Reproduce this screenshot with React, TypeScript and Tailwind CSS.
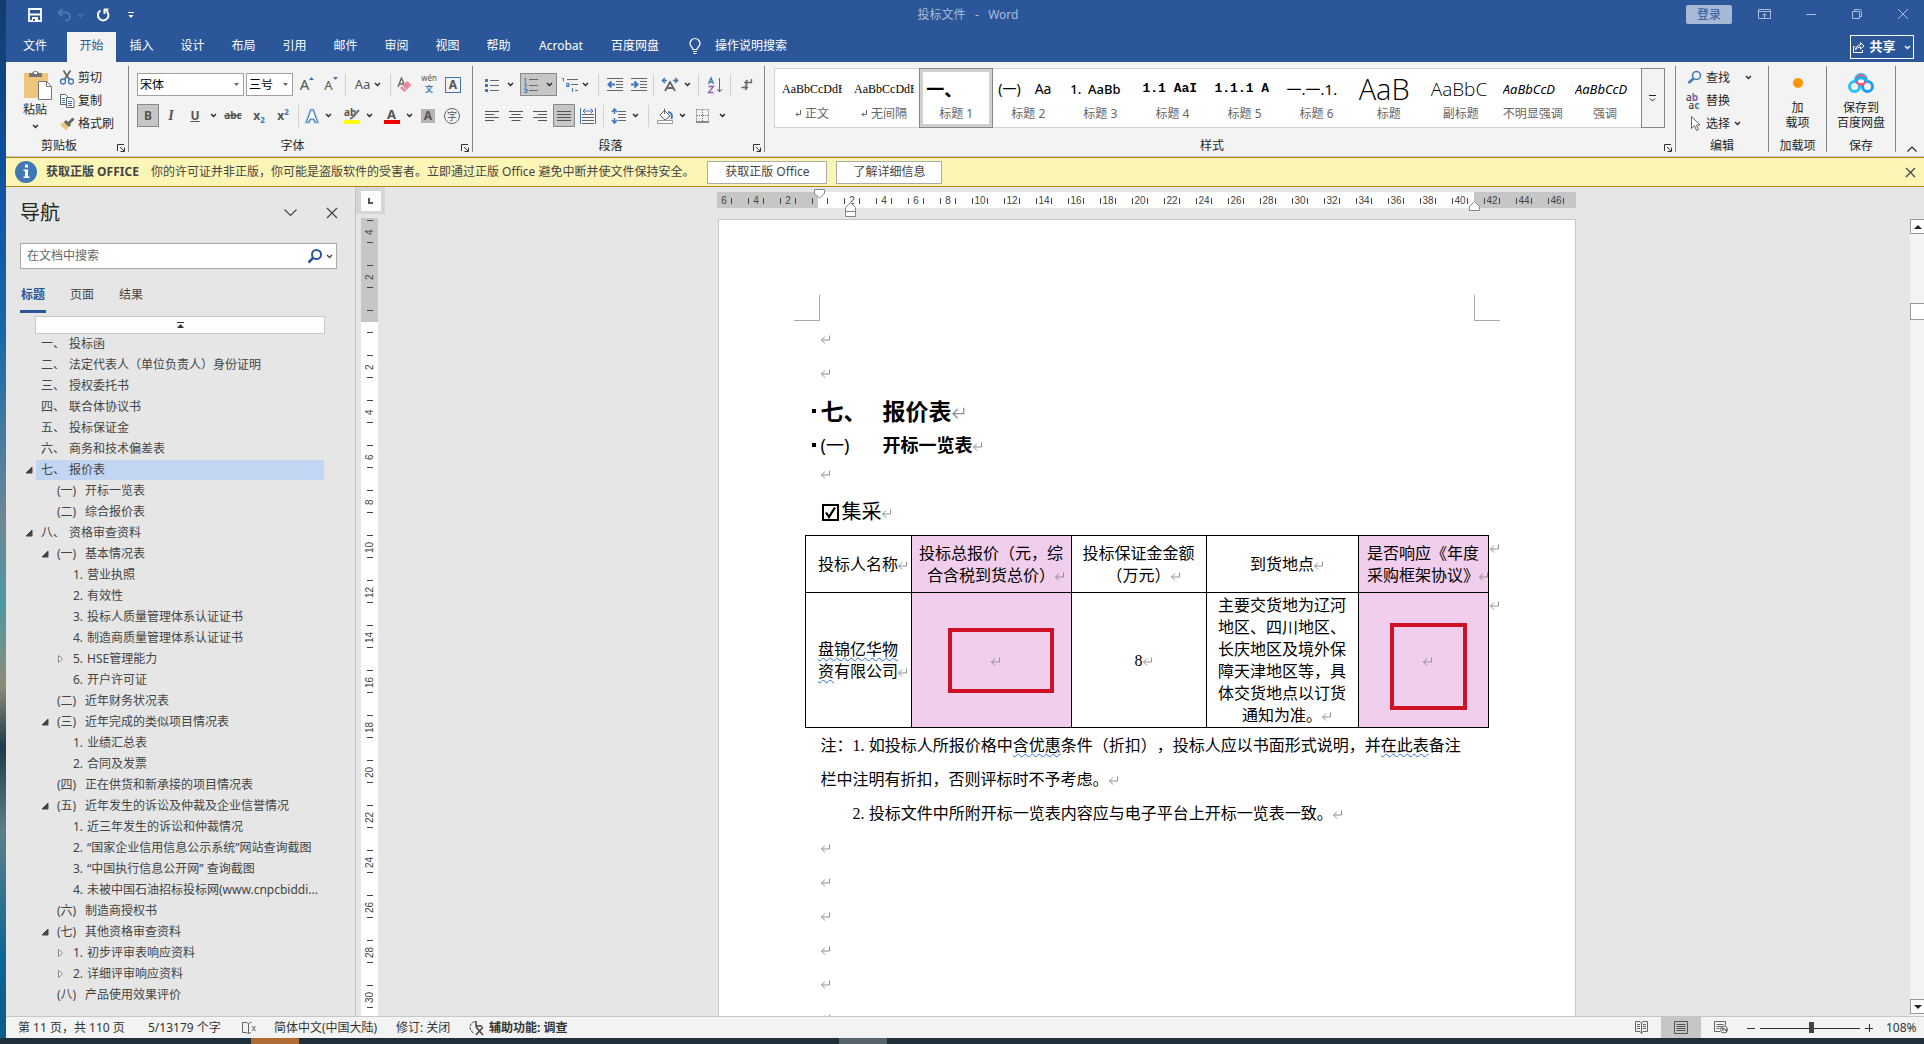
import type { ReactNode } from "react";

const navItems = [
  { level: 1, no: "一、", text: "投标函" },
  { level: 1, no: "二、", text: "法定代表人（单位负责人）身份证明" },
  { level: 1, no: "三、", text: "授权委托书" },
  { level: 1, no: "四、", text: "联合体协议书" },
  { level: 1, no: "五、", text: "投标保证金" },
  { level: 1, no: "六、", text: "商务和技术偏差表" },
  { level: 1, no: "七、", text: "报价表", state: "open", active: true },
  { level: 2, no: "(一)", text: "开标一览表" },
  { level: 2, no: "(二)", text: "综合报价表" },
  { level: 1, no: "八、", text: "资格审查资料", state: "open" },
  { level: 2, no: "(一)", text: "基本情况表", state: "open" },
  { level: 3, no: "1.", text: "营业执照" },
  { level: 3, no: "2.", text: "有效性" },
  { level: 3, no: "3.", text: "投标人质量管理体系认证证书" },
  { level: 3, no: "4.", text: "制造商质量管理体系认证证书" },
  { level: 3, no: "5.", text: "HSE管理能力", state: "closed" },
  { level: 3, no: "6.", text: "开户许可证" },
  { level: 2, no: "(二)", text: "近年财务状况表" },
  { level: 2, no: "(三)", text: "近年完成的类似项目情况表", state: "open" },
  { level: 3, no: "1.", text: "业绩汇总表" },
  { level: 3, no: "2.", text: "合同及发票" },
  { level: 2, no: "(四)", text: "正在供货和新承接的项目情况表" },
  { level: 2, no: "(五)", text: "近年发生的诉讼及仲裁及企业信誉情况", state: "open" },
  { level: 3, no: "1.", text: "近三年发生的诉讼和仲裁情况" },
  { level: 3, no: "2.", text: "“国家企业信用信息公示系统”网站查询截图" },
  { level: 3, no: "3.", text: "“中国执行信息公开网” 查询截图" },
  { level: 3, no: "4.", text: "未被中国石油招标投标网(www.cnpcbiddi..." },
  { level: 2, no: "(六)", text: "制造商授权书" },
  { level: 2, no: "(七)", text: "其他资格审查资料", state: "open" },
  { level: 3, no: "1.", text: "初步评审表响应资料", state: "closed" },
  { level: 3, no: "2.", text: "详细评审响应资料", state: "closed" },
  { level: 2, no: "(八)", text: "产品使用效果评价" },
];

const ribbonTabs = ["插入", "设计", "布局", "引用", "邮件", "审阅", "视图", "帮助"];

const styleItems = [
  { name: "正文", mark: true, sample: "AaBbCcDdE", look: "font-['Liberation_Serif'] text-[12px]" },
  { name: "无间隔", mark: true, sample: "AaBbCcDdE", look: "font-['Liberation_Serif'] text-[12px]" },
  { name: "标题 1", sample: "一、", look: "font-bold text-[18px]", selected: true },
  { name: "标题 2", sample: "(一)　Aa", look: "text-[14px]" },
  { name: "标题 3", sample: "1.  AaBb", look: "font-medium text-[13px]" },
  { name: "标题 4", sample: "1.1 AaI", look: "font-['Liberation_Mono'] font-bold text-[13px]" },
  { name: "标题 5", sample: "1.1.1 A", look: "font-['Liberation_Mono'] font-bold text-[13px]" },
  { name: "标题 6", sample: "一.一.1.", look: "text-[15px] text-[#1f4e69]" },
  { name: "标题", sample: "AaB", look: "font-['Open_Sans'] font-light text-[29px]" },
  { name: "副标题", sample: "AaBbC", look: "font-['Open_Sans'] font-light text-[19px] text-[#5a5a5a]" },
  { name: "不明显强调", sample: "AaBbCcD", look: "italic text-[13px] text-[#404040]" },
  { name: "强调", sample: "AaBbCcD", look: "italic text-[13px]" },
];

const rulerX = ["6", "4", "2", "", ...Array.from({ length: 23 }, (_, i) => String(i * 2 + 2))];
const rulerY = ["4", "2", "", ...Array.from({ length: 15 }, (_, i) => String(i * 2 + 2))];

const Svg = ({ w = 16, h = 16, className = "", children }: { w?: number; h?: number; className?: string; children: ReactNode }) => (
  <svg
    width={w}
    height={h}
    viewBox={`0 0 ${w} ${h}`}
    fill="none"
    stroke="currentColor"
    className={`shrink-0 overflow-visible ${className}`}
    aria-hidden="true"
  >
    {children}
  </svg>
);

const Chevron = ({ className = "" }: { className?: string }) => (
  <Svg w={7} h={5} className={className}>
    <path d="M1 1l2.5 2.5L6 1" strokeWidth="1.3" />
  </Svg>
);

const Sep = ({ className = "mx-0.5" }: { className?: string }) => (
  <span className={`h-[22px] w-px shrink-0 bg-[#d0d0d0] ${className}`} />
);

const Tool = ({ label, className = "w-6", children }: { label: string; className?: string; children: ReactNode }) => (
  <button aria-label={label} className={`flex h-[23px] shrink-0 items-center justify-center ${className}`}>
    {children}
  </button>
);

const Launcher = () => (
  <button aria-label="对话框启动器" className="absolute right-[3px] bottom-0 h-2">
    <Svg w={8} h={8} className="text-[#333]">
      <path d="M.5 7V.5H7M3 3l4 4M7.5 3.5v4h-4" />
    </Svg>
  </button>
);

const Group = ({ title, className = "", launcher, children }: { title: string; className?: string; launcher?: boolean; children: ReactNode }) => (
  <section className={`relative flex h-[86px] shrink-0 flex-col justify-between border-r border-[#858585] ${className}`}>
    {children}
    <div className={`h-[13px] text-center leading-[13px] ${launcher ? "pr-4" : ""}`}>{title}</div>
    {launcher && <Launcher />}
  </section>
);

// paragraph mark, takes no room in the line
const Mark = ({ big = false }: { big?: boolean }) => (
  <span className="inline-block w-0 whitespace-nowrap">
    <svg
      width={big ? 14 : 10}
      height={big ? 12 : 9}
      viewBox="0 0 10 9"
      fill="none"
      stroke="#909090"
      className="inline-block max-w-none overflow-visible"
      aria-hidden="true"
    >
      <path d="M8.500 .5v4.500H.5M4 1.500L.5 5 4 8.500" />
    </svg>
  </span>
);

const Num = ({ children }: { children: ReactNode }) => (
  <span className="inline-block min-w-2 font-['Liberation_Serif',serif]">{children}</span>
);

const Wavy = ({ children }: { children: ReactNode }) => (
  <span className="underline decoration-[#2f6fe0] decoration-wavy decoration-1 underline-offset-2">{children}</span>
);

const TitleBar = () => (
  <header className="flex h-8 items-start text-[#a9bddb]">
    <div className="flex h-[30px] flex-1 items-center pl-[22px] text-white">
      <button aria-label="保存">
        <Svg w={14} h={14}>
          <path d="M1 1h12v12H1z" strokeWidth="1.8" />
          <path d="M1 6.500h12" strokeWidth="2" />
          <path d="M4 9h6v4H4z" fill="white" stroke="none" />
          <path d="M5 11h2v2H5z" fill="#2b579a" stroke="none" />
        </Svg>
      </button>
      <button aria-label="撤消" className="ml-[15px] flex items-center gap-1.5 text-[#4a78ba]">
        <Svg w={14} h={14}>
          <path d="M5.500 1L1.500 4.500l4 3.500M2 4.500h7a4 4 0 0 1 0 8H8" strokeWidth="2" />
        </Svg>
        <Chevron />
      </button>
      <button aria-label="重复" className="ml-3">
        <Svg w={14} h={14}>
          <path d="M4.500 2.500A5.300 5.300 0 1 0 10 2.600" strokeWidth="2" />
          <path d="M8 1.500h4.500M8.500 1v5" strokeWidth="2" />
        </Svg>
      </button>
      <button aria-label="自定义快速访问工具栏" className="ml-[18px]">
        <Svg w={6} h={7}>
          <path d="M0 .5h6" />
          <path d="M.5 3h5L3 6z" fill="white" stroke="none" />
        </Svg>
      </button>
    </div>
    <h1 className="h-[30px] text-[12px] leading-[30px] whitespace-pre">投标文件   -   Word</h1>
    <div className="flex h-[27px] flex-1 items-center justify-end pr-4">
      <button className="mt-0.5 h-[19px] w-[46px] rounded-xs bg-[#a6b9d6] text-[12px] leading-[19px] text-[#2b579a]">登录</button>
      <button aria-label="功能区显示选项" className="ml-[26px]">
        <Svg w={13} h={10}>
          <path d="M.5.5h12v9H.5zM.5 2.500h12M6.500 9V4.500M4.500 6.500l2-2 2 2" />
        </Svg>
      </button>
      <button aria-label="最小化" className="ml-[35px]">
        <Svg w={10} h={10}>
          <path d="M0 5.500h10" />
        </Svg>
      </button>
      <button aria-label="还原" className="ml-9">
        <Svg w={10} h={10}>
          <path d="M.5 2.500h7v7h-7zM2.500 2V.5h5a2 2 0 0 1 2 2v5H8" />
        </Svg>
      </button>
      <button aria-label="关闭" className="ml-9">
        <Svg w={10} h={10}>
          <path d="M0 0l10 10M10 0L0 10" />
        </Svg>
      </button>
    </div>
  </header>
);

const Tabs = () => (
  <nav className="flex h-[30px] items-stretch text-[12px] text-white">
    <button className="mr-[3px] w-[58px] pb-0.5">文件</button>
    <button className="w-[49px] bg-[#f3f3f3] pb-0.5 text-[#2b579a]">开始</button>
    {ribbonTabs.map((tab) => (
      <button key={tab} className="w-[51px] pb-0.5">
        {tab}
      </button>
    ))}
    <button className="w-[74px] pb-0.5">Acrobat</button>
    <button className="w-[74px] pb-0.5">百度网盘</button>
    <button className="ml-[17px] flex items-center gap-[14px] pb-0.5">
      <Svg w={12} h={16}>
        <path d="M4 11.500c0-2-3-3-3-6a5 5 0 0 1 10 0c0 3-3 4-3 6zM4 13.500h4M4.500 15.500h3" strokeWidth="1.200" />
      </Svg>
      操作说明搜索
    </button>
    <button className="mt-[3px] mr-2.5 ml-auto flex h-6 w-16 items-center justify-center gap-1 border border-white text-[13px] font-bold">
      <Svg w={12} h={12}>
        <path d="M2 5.500H.5v6h9V9M2.500 9c0-3 2-5 5-5V1.500L11 5 7.500 8V6c-2 0-4 1-5 3z" />
      </Svg>
      共享
      <Chevron className="ml-1" />
    </button>
  </nav>
);

const Lines = ({ d }: { d: string }) => (
  <Svg w={14} h={12} className="text-[#555]">
    <path d={d} />
  </Svg>
);

const ClipboardGroup = () => (
  <Group title="剪贴板" className="w-[123px]" launcher>
    <div className="flex pl-[13px]">
      <button className="flex w-8 flex-col items-center pt-1">
        <Svg w={28} h={30} className="ml-1">
          <path d="M1 3h24v25H1z" fill="#eec57a" stroke="none" />
          <path d="M6 3h3a4 4 0 0 1 7 0h3v4H6z" fill="#777" stroke="none" />
          <path d="M11 2h3v2h-3z" fill="#f3f3f3" stroke="none" />
          <path d="M15.500 11.500h8l5 5v13h-13z" fill="white" stroke="#777" />
          <path d="M23.500 11.500v5h5" stroke="#777" />
        </Svg>
        <span className="leading-5">粘贴</span>
        <Chevron className="mt-1" />
      </button>
      <div className="flex flex-col pl-[9px]">
        <button className="flex h-[23px] items-center gap-1">
          <Svg w={14} h={15}>
            <path d="M3.500.5l6 9M10.500.5l-6 9" stroke="#666" strokeWidth="1.800" />
            <circle cx="3" cy="11.500" r="2.500" stroke="#3f78b5" strokeWidth="1.300" />
            <circle cx="11" cy="11.500" r="2.500" stroke="#3f78b5" strokeWidth="1.300" />
          </Svg>
          剪切
        </button>
        <button className="flex h-[23px] items-center gap-1">
          <Svg w={14} h={14} className="text-[#666]">
            <path d="M.5.500h5l2 2v8h-7z" fill="white" />
            <path d="M6.500 3.500h5l2.500 2.500v7.500H6.500z" fill="white" />
            <path d="M2 4.500h3M2 6.500h3M2 8.500h3M8 7.500h4M8 9.500h4M8 11.500h4" stroke="#3f78b5" />
          </Svg>
          复制
        </button>
        <button className="flex h-[23px] items-center gap-1">
          <Svg w={14} h={14}>
            <path d="M0 7l5-2 4 4-3 5z" fill="#eec57a" stroke="none" />
            <path d="M5 4l5 5M9 6l4.500-4.500" stroke="#666" strokeWidth="3" />
          </Svg>
          格式刷
        </button>
      </div>
    </div>
  </Group>
);

const FontGroup = () => (
  <Group title="字体" className="w-[344px]" launcher>
    <div className="flex flex-col gap-2 pt-[7px] pl-2 text-[#555]">
      <div className="flex items-center">
        <select aria-label="字体" className="h-[23px] w-[107px] appearance-none border border-[#a0a0a0] bg-white px-0.5 text-[12px] leading-none text-black">
          <option>宋体</option>
        </select>
        <Svg w={5} h={3} className="-ml-2.5 mr-[5px]">
          <path d="M0 0h5L2.500 3z" fill="#666" stroke="none" />
        </Svg>
        <select aria-label="字号" className="ml-0.5 h-[23px] w-[47px] appearance-none border border-[#a0a0a0] bg-white px-0.5 text-[12px] leading-none text-black">
          <option>三号</option>
        </select>
        <Svg w={5} h={3} className="-ml-2.5 mr-[5px]">
          <path d="M0 0h5L2.500 3z" fill="#666" stroke="none" />
        </Svg>
        <Tool label="增大字号" className="ml-0.5 w-6">
          <span className="text-[15px]">A</span>
          <Svg w={5} h={3} className="mb-3">
            <path d="M0 3h5L2.500 0z" fill="#3f78b5" stroke="none" />
          </Svg>
        </Tool>
        <Tool label="减小字号">
          <span className="pt-0.5 text-[13px]">A</span>
          <Svg w={5} h={3} className="mb-3">
            <path d="M0 0h5L2.500 3z" fill="#3f78b5" stroke="none" />
          </Svg>
        </Tool>
        <Sep />
        <Tool label="更改大小写" className="w-10 gap-1 text-[13px]">
          Aa <Chevron className="text-[#222]" />
        </Tool>
        <Sep />
        <Tool label="清除所有格式">
          <Svg w={16} h={16}>
            <path d="M1 10L4.500 1 7 7M2.500 7h4" stroke="#666" strokeWidth="1.400" />
            <path d="M3 11l7-7 4.500 4-7 7z" fill="#e8879b" stroke="none" />
            <path d="M5 9l4.500 4" stroke="#f3f3f3" />
          </Svg>
        </Tool>
        <Tool label="拼音指南" className="w-6 flex-col">
          <span className="h-2 text-[8px] leading-[8px]">wén</span>
          <span className="mt-px text-[8px] leading-[12px] font-bold text-[#3f78b5]">文</span>
        </Tool>
        <Tool label="字符边框">
          <span className="h-4 w-4 border border-[#3f78b5] text-[12px] leading-[14px] font-bold">A</span>
        </Tool>
      </div>
      <div className="flex items-center">
        <Tool label="加粗" className="w-[22px] border border-[#8a8a8a] bg-[#c6c6c6] text-[12px] font-bold">B</Tool>
        <Tool label="倾斜" className="w-6 font-['Liberation_Serif'] text-[14px] font-bold italic">I</Tool>
        <Tool label="下划线" className="w-6 text-[12px] font-bold underline">U</Tool>
        <Tool label="下划线样式" className="w-3 text-[#222]"><Chevron /></Tool>
        <Tool label="删除线" className="mr-px ml-px w-[26px] text-[10px] font-bold line-through">abc</Tool>
        <Tool label="下标" className="w-6 text-[12px] font-bold">
          x<span className="pt-2 text-[8px] leading-none text-[#3f78b5]">2</span>
        </Tool>
        <Tool label="上标" className="w-6 text-[12px] font-bold">
          x<span className="pb-2 text-[8px] leading-none text-[#3f78b5]">2</span>
        </Tool>
        <Sep className="mx-[3px]" />
        <Tool label="文本效果和版式" className="mr-1 w-8 gap-1.5">
          <Svg w={14} h={14}>
            <path d="M1.500 13L6 1h2l4.500 12h-2.500L9 10H5l-1 3z" stroke="#a9c8ea" strokeWidth="3" />
            <path d="M1.500 13L6 1h2l4.500 12h-2.500L9 10H5l-1 3z" stroke="#3f78b5" fill="white" />
          </Svg>
          <Chevron className="text-[#222]" />
        </Tool>
        <Tool label="文本突出显示颜色" className="w-10 gap-1.5">
          <Svg w={16} h={16}>
            <text x="0" y="8" fontSize="10" fontWeight="bold" fill="#555" stroke="none">ab</text>
            <path d="M15 2L9 9l-3 2" stroke="#777" strokeWidth="2" />
            <path d="M0 12h16v4H0z" fill="#ff0" stroke="none" />
          </Svg>
          <Chevron className="text-[#222]" />
        </Tool>
        <Tool label="字体颜色" className="w-10 gap-1.5">
          <span className="h-4 w-4 border-b-4 border-[#f00000] text-center text-[13px] leading-3 font-bold">A</span>
          <Chevron className="text-[#222]" />
        </Tool>
        <Tool label="字符底纹" className="-ml-0.5 w-6">
          <span className="h-3.5 w-3.5 bg-[#b5b5b5] text-[12px] leading-[14px] font-bold">A</span>
        </Tool>
        <Tool label="带圈字符">
          <span className="h-4 w-4 rounded-full border border-[#666] text-[10px] leading-[14px]">字</span>
        </Tool>
      </div>
    </div>
  </Group>
);

const ParagraphGroup = () => (
  <Group title="段落" className="w-[292px]" launcher>
    <div className="flex flex-col gap-2 pt-[7px] text-[#666]">
      <div className="flex items-center pl-[7px]">
        <Tool label="项目符号" className="w-[38px] gap-2">
          <Svg w={14} h={14}>
            <path d="M5 2.500h9M5 7.500h9M5 12.500h9" />
            <path d="M0 1h3v3H0zM0 6h3v3H0zM0 11h3v3H0z" fill="#3f78b5" stroke="none" />
          </Svg>
          <Chevron className="text-[#222]" />
        </Tool>
        <Tool label="编号" className="ml-0.5 w-[37px] gap-2 border border-[#8a8a8a] bg-[#c6c6c6]">
          <Svg w={14} h={16}>
            <path d="M5 2.500h9M5 8.500h9M5 13.500h9" />
            <path d="M0 1.500h1.500v4M0 7h2.500L1 10h2M0 12h3v3.500H0M1 13.500h2" stroke="#3f78b5" />
          </Svg>
          <Chevron className="text-[#222]" />
        </Tool>
        <Tool label="多级列表" className="w-[37px] gap-1">
          <Svg w={16} h={16}>
            <path d="M5 2.500h11M9 7.500h7M13 13.500h3" />
            <path d="M0 1.500h1.500v3M4 6.500h3v3H4.500v-1.500H7M10.500 11v4" stroke="#3f78b5" />
          </Svg>
          <Chevron className="text-[#222]" />
        </Tool>
        <Sep className="mr-1 ml-1" />
        <Tool label="减少缩进量" className="w-[23px]">
          <Svg w={16} h={13}>
            <path d="M0 .5h16M9 3.500h7M9 6.500h7M9 9.500h7M0 12.500h16" />
            <path d="M8 6.500H2M4.500 3.500l-3 3 3 3" stroke="#3f78b5" strokeWidth="2" />
          </Svg>
        </Tool>
        <Tool label="增加缩进量" className="w-[25px]">
          <Svg w={16} h={13}>
            <path d="M0 .5h16M9 3.500h7M9 6.500h7M9 9.500h7M0 12.500h16" />
            <path d="M0 6.500h6M3.500 3.500l3 3-3 3" stroke="#3f78b5" strokeWidth="2" />
          </Svg>
        </Tool>
        <Sep className="mr-1 ml-0.5" />
        <Tool label="中文版式" className="w-9 gap-1.5">
          <Svg w={16} h={13}>
            <path d="M3 13l5-9 5 9M5 10h6" strokeWidth="1.800" />
            <path d="M5 2.500H0M3 0L.5 2.500 3 5M11 2.500h5M13 0l2.500 2.500L13 5" stroke="#3f78b5" strokeWidth="1.500" />
          </Svg>
          <Chevron className="text-[#222]" />
        </Tool>
        <Sep className="mx-1" />
        <Tool label="排序" className="w-[23px]">
          <Svg w={14} h={16}>
            <path d="M.5 7L3 1l2.500 6M1.500 5h3" stroke="#3f78b5" strokeWidth="1.300" />
            <path d="M.5 9.500h5l-5 6h5" stroke="#8c5fb0" strokeWidth="1.300" />
            <path d="M11.500 1v14M9 12l2.500 3 2.500-3" />
          </Svg>
        </Tool>
        <Sep className="mr-1 ml-1" />
        <Tool label="显示/隐藏编辑标记" className="w-6">
          <Svg w={12} h={14}>
            <path d="M10.500 1v3.500H4M6.500 2L4 4.500 6.500 7M.5 9.500h6M4 7l2.500 2.500L4 12" strokeWidth="1.300" />
          </Svg>
        </Tool>
      </div>
      <div className="flex items-center pl-[7px]">
        <Tool label="左对齐"><Lines d="M0 1.500h14M0 4.500h9M0 7.500h14M0 10.500h9" /></Tool>
        <Tool label="居中"><Lines d="M0 1.500h14M2.500 4.500h9M0 7.500h14M2.500 10.500h9" /></Tool>
        <Tool label="右对齐"><Lines d="M0 1.500h14M5 4.500h9M0 7.500h14M5 10.500h9" /></Tool>
        <Tool label="两端对齐" className="ml-px w-[22px] border border-[#8a8a8a] bg-[#c6c6c6]">
          <Lines d="M0 1.500h14M0 4.500h14M0 7.500h14M0 10.500h14" />
        </Tool>
        <Tool label="分散对齐" className="w-[26px]">
          <Svg w={16} h={16}>
            <path d="M2 6.500h12M2 9.500h12M2 12.500h12M2 15.500h12" />
            <path d="M.5 0v16M15.500 0v16M3 3h10M5.500.5L3 3l2.500 2.500M10.500.5L13 3l-2.500 2.500" stroke="#3f78b5" />
          </Svg>
        </Tool>
        <Sep />
        <Tool label="行和段落间距" className="w-[38px] gap-1.5">
          <Svg w={14} h={16}>
            <path d="M6 3.500h8M6 6.500h8M6 9.500h8M6 12.500h8" />
            <path d="M2.500 1v5M0 4l2.500-3L5 4M2.500 15v-5M0 12l2.500 3L5 12" stroke="#3f78b5" strokeWidth="1.500" />
          </Svg>
          <Chevron className="text-[#222]" />
        </Tool>
        <Sep className="mx-1" />
        <Tool label="底纹" className="w-9 gap-1.5">
          <Svg w={16} h={16}>
            <path d="M7.500 2.500L13 8l-5 4-5-5zM7.500 6V.5" fill="white" />
            <path d="M11 4c3 0 5 3 3.500 7" stroke="#3f78b5" strokeWidth="2" />
            <path d="M.5 12.500h15v3H.5z" fill="white" stroke="#999" />
          </Svg>
          <Chevron className="text-[#222]" />
        </Tool>
        <Tool label="边框" className="ml-[3px] w-[38px] gap-2.5">
          <Svg w={13} h={14}>
            <path d="M.5.5h12v12M.5.5v12M6.500 1v11M1 6.500h11" strokeDasharray="1 1" />
            <path d="M0 13h13" strokeWidth="1.500" />
          </Svg>
          <Chevron className="text-[#222]" />
        </Tool>
      </div>
    </div>
  </Group>
);

const StylesGroup = () => (
  <Group title="样式" className="flex-1" launcher>
    <div className="mt-0.5 mr-2.5 ml-[9px] flex h-[60px] border border-[#d0d0d0] bg-white pl-px">
      {styleItems.map((item) => (
        <button
          key={item.name}
          className={`flex min-w-0 flex-1 flex-col items-center ${item.selected ? "border-3 border-[#d0d0d0] outline outline-[#858585]" : "p-[3px]"}`}
        >
          <span className={`h-[34px] w-[60px] overflow-hidden text-left leading-[34px] whitespace-pre text-black ${item.look}`}>
            {item.sample}
          </span>
          <span className="flex items-center gap-1 text-[12px] leading-[15px] whitespace-nowrap text-[#666]">
            {item.mark && (
              <Svg w={6} h={7}>
                <path d="M5.500 0v4.500H1M3 2.500l-2 2 2 2" />
              </Svg>
            )}
            {item.name}
          </span>
        </button>
      ))}
      <button aria-label="其他样式" className="-my-px -mr-px flex w-6 shrink-0 items-center justify-center border border-[#858585] bg-[#f3f3f3]">
        <Svg w={7} h={7} className="text-[#222]">
          <path d="M0 .5h7M1 3.500L3.500 6 6 3.500" />
        </Svg>
      </button>
    </div>
  </Group>
);

const Ribbon = () => (
  <div className="flex h-[95px] border-b border-[#c8c6c4] bg-[#f3f3f3] pt-1 text-[12px] text-[#262626]">
    <ClipboardGroup />
    <FontGroup />
    <ParagraphGroup />
    <StylesGroup />
    <Group title="编辑" className="w-[93px]">
      <div className="flex flex-col pl-3">
        <button className="flex h-[23px] items-center">
          <Svg w={14} h={13} className="text-[#3f78b5]">
            <circle cx="8.500" cy="4.500" r="4" strokeWidth="1.500" />
            <path d="M5.500 7.500L.5 12" strokeWidth="2.500" />
          </Svg>
          <span className="ml-1">查找</span>
          <Chevron className="ml-[15px]" />
        </button>
        <button className="flex h-[23px] items-center">
          <span className="-ml-1 w-4 text-[10px] leading-[8px]">
            <span>a<b className="text-[#8c5fb0]">b</b></span>
            <span className="block pl-1">a<b className="text-[#3f78b5]">c</b></span>
          </span>
          <span className="ml-1.5">替换</span>
        </button>
        <button className="flex h-[23px] items-center">
          <Svg w={14} h={15} className="text-[#666]">
            <path d="M3.500.5v12l3-3 2 5 2-1-2-4.500h3.500z" fill="white" />
          </Svg>
          <span className="ml-1">选择</span>
          <Chevron className="ml-1" />
        </button>
      </div>
    </Group>
    <Group title="加载项" className="w-[58px]">
      <button className="flex flex-col items-center pt-3">
        <span className="h-2.5 w-2.5 rounded-full bg-[#ff9500]" />
        <span className="mt-3 leading-[15px]">加<br />载项</span>
      </button>
    </Group>
    <Group title="保存" className="w-[69px]">
      <button className="flex flex-col items-center pt-[7px]">
        <Svg w={26} h={20}>
          <circle cx="6.500" cy="13.500" r="5" stroke="#25c3f5" strokeWidth="3" />
          <circle cx="19.500" cy="13.500" r="5" stroke="#1b9df5" strokeWidth="3" />
          <path d="M7.500 9V7a5.500 5.500 0 0 1 11 0v2" stroke="#25c3f5" strokeWidth="3" />
          <circle cx="13" cy="7" r="4.500" fill="white" stroke="#f5517a" strokeWidth="2.500" />
          <path d="M8 8a5.500 5.500 0 0 1 10 0" stroke="#1bb0f5" strokeWidth="3" />
        </Svg>
        <span className="mt-[7px] leading-[15px]">保存到<br />百度网盘</span>
      </button>
    </Group>
    <button aria-label="折叠功能区" className="ml-1 flex w-6 items-end justify-center pb-1">
      <Svg w={10} h={6}>
        <path d="M.5 5.500L5 1l4.500 4.500" strokeWidth="1.200" />
      </Svg>
    </button>
  </div>
);

const MessageBar = () => (
  <div className="flex h-[30px] items-center border-y border-[#b08800] bg-[#fcf6b6] pr-[9px] pl-[9px] text-[12px] text-[#444]">
    <Svg w={22} h={22}>
      <circle cx="11" cy="11" r="11" fill="#3f78b5" stroke="none" />
      <path d="M10 3.500h3v3h-3zM8.500 8.500H13v7h1.500V17h-6v-1.500H10V10H8.500z" fill="white" stroke="none" />
    </Svg>
    <strong className="ml-[9px]">获取正版 OFFICE</strong>
    <span className="ml-3">你的许可证并非正版，你可能是盗版软件的受害者。立即通过正版 Office 避免中断并使文件保持安全。</span>
    <button className="ml-[13px] h-[23px] w-[120px] border border-[#ababab] bg-white">获取正版 Office</button>
    <button className="ml-[9px] h-[23px] w-[106px] border border-[#ababab] bg-white">了解详细信息</button>
    <button aria-label="关闭消息" className="ml-auto">
      <Svg w={9} h={9}>
        <path d="M0 0l9 9M9 0L0 9" strokeWidth="1.300" />
      </Svg>
    </button>
  </div>
);

const NavPane = () => (
  <aside className="flex w-[350px] shrink-0 flex-col border-r border-[#c0c0c0] text-[12px] text-[#444]">
    <div className="flex items-center pt-3 pr-[18px] pl-[14px]">
      <h2 className="flex-1 text-[20px] leading-7 text-[#262626]">导航</h2>
      <button aria-label="任务窗格选项" className="mr-[30px]">
        <Svg w={13} h={8}>
          <path d="M.5.5l6 6 6-6" strokeWidth="1.200" />
        </Svg>
      </button>
      <button aria-label="关闭窗格">
        <Svg w={10} h={10}>
          <path d="M0 0l10 10M10 0L0 10" strokeWidth="1.200" />
        </Svg>
      </button>
    </div>
    <div className="mt-4 ml-[14px] flex h-[26px] w-[317px] items-center border border-[#ababab] bg-white pr-[3px]">
      <input aria-label="在文档中搜索" placeholder="在文档中搜索" className="h-full flex-1 px-1.5 pb-0.5 outline-none placeholder:text-[#666]" />
      <Svg w={14} h={14} className="text-[#2b579a]">
        <circle cx="8.500" cy="5.500" r="4.500" strokeWidth="2" />
        <path d="M5 9l-4.500 4.500" strokeWidth="2.500" />
      </Svg>
      <Chevron className="ml-1" />
    </div>
    <div className="mt-[17px] ml-[14px] flex gap-[23px]">
      <button className="h-[27px] w-[26px] border-b-3 border-[#2b579a] pb-2 font-bold text-[#2b579a]">标题</button>
      <button className="h-[27px] w-[26px] pb-[11px]">页面</button>
      <button className="h-[27px] w-[26px] pb-[11px]">结果</button>
    </div>
    <button aria-label="跳转到开头" className="mt-[3px] ml-[29px] flex h-[18px] w-[290px] shrink-0 items-center justify-center border border-[#c6c6c6] bg-[#fdfdfd]">
      <Svg w={7} h={6} className="text-[#333]">
        <path d="M0 .5h7" />
        <path d="M0 6h7L3.500 2z" fill="#333" stroke="none" />
      </Svg>
    </button>
    <ul className="-mt-px [text-spacing-trim:space-all]">
      {navItems.map((item, i) => (
        <li
          key={i}
          className={`flex h-[21px] items-center ${item.level === 1 ? "pl-4" : item.level === 2 ? "pl-8" : "pl-12"}`}
        >
          <span className="mr-px flex w-[13px] shrink-0 justify-center">
            {item.state === "open" && (
              <Svg w={6} h={6} className="text-[#444]">
                <path d="M6 0v6H0z" fill="#444" />
              </Svg>
            )}
            {item.state === "closed" && (
              <Svg w={5} h={8} className="text-[#888]">
                <path d="M.5.5v7l4-3.500z" fill="white" />
              </Svg>
            )}
          </span>
          <a href="#" className={`flex h-5 items-center pl-[5px] leading-5 whitespace-nowrap ${item.active ? "w-[288px] bg-[#c2d5f2]" : ""}`}>
            <span className={item.level === 3 ? "min-w-[14px]" : "w-7"}>{item.no}</span>
            {item.text}
          </a>
        </li>
      ))}
    </ul>
  </aside>
);

const VerticalRuler = () => (
  <div className="flex w-[29px] shrink-0 flex-col overflow-hidden">
    <div className="flex h-[27px] w-[29px] shrink-0 items-center justify-center bg-[#d6d6d6]">
      <div className="flex h-5 w-5 items-center justify-center bg-[#fdfdfd]">
        <Svg w={5} h={6} className="text-[#555]">
          <path d="M1 0v5h4" strokeWidth="2" />
        </Svg>
      </div>
    </div>
    <div className="mt-1 ml-[5px] w-[17px] flex-1 overflow-hidden bg-[linear-gradient(#c6c6c6_104px,white_104px)]">
      <div className="-mt-[9px] font-['Liberation_Sans'] text-[10px] text-[#444]">
        {rulerY.map((n, i) => (
          <div key={i} className="flex h-[45px] flex-col items-center justify-between py-[11px]">
            <span className="h-px w-1.5 shrink-0 bg-[#444]" />
            <span className="flex h-3 rotate-180 items-center justify-center leading-none [writing-mode:vertical-rl]">{n}</span>
            <span className="h-px w-1.5 shrink-0 bg-[#444]" />
          </div>
        ))}
      </div>
    </div>
  </div>
);

const HorizontalRuler = () => (
  <div className="relative mt-[5px] w-[859px]">
    <div className="h-4 overflow-hidden bg-[linear-gradient(90deg,#c6c6c6_101px,white_101px,white_757px,#c6c6c6_757px)]">
      <div className="-ml-[9px] flex font-['Liberation_Sans'] text-[10px] leading-[17px] text-[#444]">
        {rulerX.map((n, i) => (
          <div key={i} className="flex w-8 shrink-0 items-center justify-between px-2">
            <span className="h-1.5 w-px bg-[#444]" />
            <span>{n}</span>
            <span className="h-1.5 w-px bg-[#444]" />
          </div>
        ))}
      </div>
    </div>
    <Svg w={11} h={10} className="absolute -top-[3px] left-[97px] text-[#888]">
      <path d="M.5.5h10v4L5.500 9 .5 4.500z" fill="white" />
    </Svg>
    <Svg w={11} h={15} className="absolute top-2.5 left-32 text-[#888]">
      <path d="M5.500.5l5 5v9H.5v-9zM.5 9.500h10" fill="white" />
    </Svg>
    <Svg w={11} h={10} className="absolute top-[9px] left-[752px] text-[#888]">
      <path d="M5.500.5l5 5v4H.5v-4z" fill="white" />
    </Svg>
  </div>
);

const PriceTable = () => (
  <table className="-ml-4 table-fixed border-collapse text-center text-[16px] leading-[22px] text-black">
    <colgroup>
      <col className="w-[106px]" />
      <col className="w-[160px]" />
      <col className="w-[135px]" />
      <col className="w-[152px]" />
      <col className="w-[130px]" />
    </colgroup>
    <thead>
      <tr className="h-[57px] [&>th]:border [&>th]:border-black [&>th]:font-normal">
        <th>投标人名称<Mark /></th>
        <th className="bg-[#f1ceec]">投标总报价（元，综<br />合含税到货总价）<Mark /></th>
        <th>投标保证金金额<br />（万元）<Mark /></th>
        <th>到货地点<Mark /></th>
        <th className="relative bg-[#f1ceec]">
          是否响应《年度<br />采购框架协议》<Mark />
          <span className="absolute top-0 left-full ml-0.5"><Mark /></span>
        </th>
      </tr>
    </thead>
    <tbody>
      <tr className="h-[135px] [&>td]:border [&>td]:border-black">
        <td><Wavy>盘锦亿华物</Wavy><br /><Wavy>资</Wavy>有限公司<Mark /></td>
        <td className="relative bg-[#f1ceec]">
          <Mark />
          <span className="absolute top-[35px] left-9 h-[65px] w-[106px] border-4 border-[#cf1126]" />
        </td>
        <td><Num>8</Num><Mark /></td>
        <td>
          主要交货地为辽河<br />地区、四川地区、<br />长庆地区及境外保<br />障天津地区等，具<br />体交货地点以订货<br />通知为准。<Mark />
        </td>
        <td className="relative bg-[#f1ceec]">
          <Mark />
          <span className="absolute top-[30px] left-[31px] h-[87px] w-[77px] border-4 border-[#cf1126]" />
          <span className="absolute top-0 left-full ml-0.5"><Mark /></span>
        </td>
      </tr>
    </tbody>
  </table>
);

const Page = () => (
  <article className="mt-[11px] w-[858px] flex-1 overflow-hidden border border-b-0 border-[#c6c6c6] bg-white whitespace-nowrap text-black [text-spacing-trim:space-all]">
    <div className="flex justify-between px-[75px] pt-[75px]">
      <span className="h-[26px] w-[26px] border-r border-b border-[#aaa]" />
      <span className="h-[26px] w-[26px] border-b border-l border-[#aaa]" />
    </div>
    <div className="pl-[102px] text-[16px]">
      <p className="h-[34px] leading-[34px]"><Mark /></p>
      <p className="h-[34px] leading-[34px]"><Mark /></p>
      <h2 className="-ml-[9px] flex h-11 items-center text-[23px] font-bold">
        <span className="mr-[5px] h-1 w-1 bg-black" />
        <span className="w-[62px]">七、</span>
        <span>报价表<Mark big /></span>
      </h2>
      <h3 className="-ml-[9px] flex h-6 items-center text-[18px] font-bold">
        <span className="mr-[5px] h-1 w-1 bg-black" />
        <span className="w-[62px] text-[18px] font-normal">(一)</span>
        <span>开标一览表<Mark /></span>
      </h3>
      <p className="h-8 leading-8"><Mark /></p>
      <label className="flex h-[46px] items-center gap-[3px] pl-px text-[20px]">
        <input type="checkbox" defaultChecked className="sr-only" />
        <Svg w={17} h={17}>
          <path d="M1 1h15v15H1z" strokeWidth="2" />
          <path d="M4 8.500l3 4.500 6-9.500" strokeWidth="2.200" />
        </Svg>
        <span>集采<Mark /></span>
      </label>
      <PriceTable />
      <p className="h-[34px] leading-[34px]">
        注：<Num>1.</Num>&nbsp;如投标人所报价格中<Wavy>含优惠</Wavy>条件（折扣），投标人应以书面形式说明，并<Wavy>在此表</Wavy>备注
      </p>
      <p className="h-[34px] leading-[34px]">栏中注明有折扣，否则评标时不予考虑。<Mark /></p>
      <p className="h-[34px] pl-8 leading-[34px]"><Num>2.</Num>&nbsp;投标文件中所附开标一览表内容应与电子平台上开标一览表一致。<Mark /></p>
      {[1, 2, 3, 4, 5, 6].map((n) => (
        <p key={n} className="h-[34px] leading-[34px]"><Mark /></p>
      ))}
    </div>
  </article>
);

const ScrollBar = () => (
  <div className="mt-8 flex w-[14px] shrink-0 flex-col overflow-hidden bg-[#f3f3f3]">
    <button aria-label="向上滚动" className="flex h-[15px] w-4 items-center justify-center border border-[#999] bg-white">
      <Svg w={8} h={4}><path d="M0 4h8L4 0z" fill="#222" stroke="none" /></Svg>
    </button>
    <div className="mt-[69px] h-[17px] w-4 border border-[#999] bg-white" />
    <button aria-label="向下滚动" className="mt-auto mb-0.5 flex h-[15px] w-4 items-center justify-center border border-[#999] bg-white">
      <Svg w={8} h={4}><path d="M0 0h8L4 4z" fill="#222" stroke="none" /></Svg>
    </button>
  </div>
);

const StatusBar = () => (
  <footer className="flex h-[22px] shrink-0 items-center border-t border-[#c6c6c6] bg-[#f3f3f3] pl-3 text-[12px] whitespace-nowrap text-[#333]">
    <span className="w-[130px]">第 11 页，共 110 页</span>
    <span className="w-[94px]">5/13179 个字</span>
    <Svg w={14} h={12} className="text-[#666]">
      <path d="M6.500 2v10L5 10.500H.5v-10H5L6.500 2 8 .5h1.500M6.500 12L8 10.500h1M10 4l3.500 5M13.500 4L10 9" />
    </Svg>
    <span className="ml-[18px] w-[122px]">简体中文(中国大陆)</span>
    <span className="w-[73px]">修订: 关闭</span>
    <Svg w={16} h={16} className="text-[#444]">
      <path d="M6 1.500C0 3-.5 10 4.500 13" strokeDasharray="3 1" />
      <path d="M7 1v5l6 0M7 7l7 8M14 7l-7 8" strokeWidth="1.500" />
    </Svg>
    <span className="ml-1 font-bold">辅助功能: 调查</span>
    <div className="ml-auto flex h-full items-center">
      <button aria-label="阅读视图" className="flex w-10 justify-center">
        <Svg w={13} h={13} className="text-[#666]">
          <path d="M6.500 2v11M.5.5H5L6.500 2 8 .5h4.500v10H8L6.500 12 5 10.500H.5zM2 3.500h3M2 5.500h3M2 7.500h3M8 3.500h3M8 5.500h3M8 7.500h3" />
        </Svg>
      </button>
      <button aria-label="页面视图" className="flex h-full w-10 items-center justify-center bg-[#c6c6c6]">
        <Svg w={14} h={13} className="text-[#555]">
          <path d="M.5.500h13v12H.5zM2.500 3.500h9M2.500 5.500h9M2.500 7.500h9M2.500 9.500h9" />
        </Svg>
      </button>
      <button aria-label="Web 版式视图" className="flex w-10 justify-center">
        <Svg w={14} h={13} className="text-[#666]">
          <path d="M6 10.500H.5V.5h11v4M2.500 3.500h7M2.500 5.500h5M2.500 7.500h3" />
          <circle cx="10" cy="8.500" r="3.500" fill="#f3f3f3" />
          <path d="M8 7l2.500.5L9 9.500zM11 9l2-1-.5 2.500z" fill="#666" />
        </Svg>
      </button>
      <button aria-label="缩小" className="ml-1.5 w-2">
        <Svg w={8} h={8}><path d="M0 4.500h8" /></Svg>
      </button>
      <input
        type="range"
        aria-label="显示比例"
        min={0}
        max={100}
        defaultValue={52}
        className="mx-[5px] h-3 w-[100px] appearance-none bg-[linear-gradient(transparent_6px,#333_6px,#333_7px,transparent_7px)] [&::-webkit-slider-thumb]:h-[11px] [&::-webkit-slider-thumb]:w-[5px] [&::-webkit-slider-thumb]:appearance-none [&::-webkit-slider-thumb]:bg-[#444]"
      />
      <button aria-label="放大" className="w-2">
        <Svg w={8} h={8}><path d="M0 4.500h8M4.500 0v8" /></Svg>
      </button>
      <span className="ml-[13px] w-[38px]">108%</span>
    </div>
  </footer>
);

const App = () => {
  return (
    <div className="flex h-screen flex-col overflow-hidden bg-[#1f303a] font-['Noto_Sans','Noto_Sans_CJK_SC',sans-serif]">
      <div className="flex min-h-0 flex-1">
        <div className="w-1.5 shrink-0 bg-[linear-gradient(#123c6c,#0f4f9c_15%,#1669a8_32%,#6f8796_50%,#4f98a3_58%,#8c8d78_66%,#1f3a4c_72%,#5d7f88_80%,#0e6793_92%,#0b5c86)]" />
        <div className="flex min-w-0 flex-1 flex-col">
          <div className="bg-[#2b579a]">
            <TitleBar />
            <Tabs />
          </div>
          <Ribbon />
          <MessageBar />
          <div className="flex min-h-0 flex-1 bg-[#e6e6e6]">
            <NavPane />
            <VerticalRuler />
            <main className="flex min-w-0 flex-1 flex-col items-center overflow-hidden pr-0.5">
              <HorizontalRuler />
              <Page />
            </main>
            <ScrollBar />
          </div>
          <StatusBar />
        </div>
      </div>
      <div className="flex h-1.5 shrink-0">
        <span className="ml-[251px] w-12 bg-[#b06c34]" />
        <span className="ml-[540px] w-12 bg-[#56636a]" />
      </div>
    </div>
  );
};

export default App;
